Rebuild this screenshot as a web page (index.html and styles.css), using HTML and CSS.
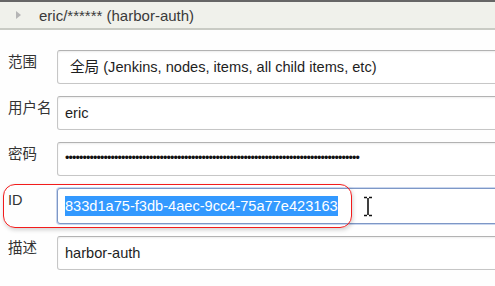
FILE: index.html
```html
<!DOCTYPE html>
<html lang="zh-CN">
<head>
    <meta charset="UTF-8">
    <title>凭据</title>
    <link rel="stylesheet" href="styles.css">
</head>
<body>
    <div class="cred_head">
        <em></em><span>eric/****** (harbor-auth)</span>
    </div>
    <div class="cred_form">
        <div class="row">
            <label>范围</label>
            <div class="field select">全局 (Jenkins, nodes, items, all child items, etc)</div>
        </div>
        <div class="row">
            <label>用户名</label>
            <div class="field">eric</div>
        </div>
        <div class="row">
            <label>密码</label>
            <div class="field pwd">••••••••••••••••••••••••••••••••••••••••••••••••••••••••••••••••••••••••••••••••••••</div>
        </div>
        <div class="row row_id">
            <label>ID</label>
            <div class="field focus"><span class="sel">833d1a75-f3db-4aec-9cc4-75a77e423163</span></div>
            <div class="mark"></div>
            <svg class="ibeam" width="10" height="21" viewBox="0 0 10 21">
                <path d="M1 1.5h3M6 1.5h3M5 2v17M1 19.5h3M6 19.5h3" stroke="#111" stroke-width="1.6" fill="none"/>
            </svg>
        </div>
        <div class="row">
            <label>描述</label>
            <div class="field">harbor-auth</div>
        </div>
    </div>
</body>
</html>
```

FILE: styles.css
```css
*{
    margin:0;
    padding:0;
    box-sizing:border-box;
}
html,body{
    width:495px;
    height:286px;
    overflow:hidden;
    background:#fefefe;
}
body{
    font-family:"Liberation Sans",Arial,"Noto Sans CJK SC",sans-serif;
    color:#333;
}
.cred_head{
    display:flex;
    align-items:center;
    height:30px;
    border-top:2px solid #666;
    border-bottom:2px solid #c9cbc4;
    background:#f0f1eb;
    font-size:15px;
    color:#3a3a3a;
}
.cred_head em{
    display:block;
    width:0;
    height:0;
    margin:0 18px 0 16px;
    border-left:5px solid #b5b5b5;
    border-top:4px solid transparent;
    border-bottom:4px solid transparent;
}
.cred_form{
    display:flex;
    flex-direction:column;
    gap:12px;
    padding:20px 0 0 8px;
}
.row{
    position:relative;
    display:flex;
    align-items:flex-start;
}
.row label{
    width:49px;
    flex-shrink:0;
    padding-top:2px;
    font-size:14.5px;
    line-height:20px;
    color:#333;
}
.field{
    width:480px;
    flex-shrink:0;
    height:34px;
    padding:0 7px;
    border:1px solid #c6c6c6;
    border-top-color:#b2b2b2;
    border-radius:3px;
    background:#fff;
    box-shadow:inset 0 1px 2px rgba(0,0,0,.08);
    font-size:14.6px;
    line-height:32px;
    color:#1e1e1e;
    white-space:nowrap;
}
.select{
    padding-left:12px;
}
.pwd{
    font-size:12.5px;
    letter-spacing:-0.875px;
    line-height:30px;
    color:#111;
}
.focus{
    height:36px;
    border:1px solid #7d97c6;
    box-shadow:0 0 0 1px #c9d6ee;
    line-height:34px;
}
.sel{
    background:#3399ff;
    color:#fff;
    padding:2px 0;
}
.mark{
    position:absolute;
    left:-5px;
    top:-4px;
    width:349px;
    height:44px;
    border:1.5px solid #f21c1c;
    border-radius:12px;
    box-shadow:1px 2px 4px rgba(0,0,0,.18);
    pointer-events:none;
}
.ibeam{
    position:absolute;
    left:355px;
    top:8px;
}
```
